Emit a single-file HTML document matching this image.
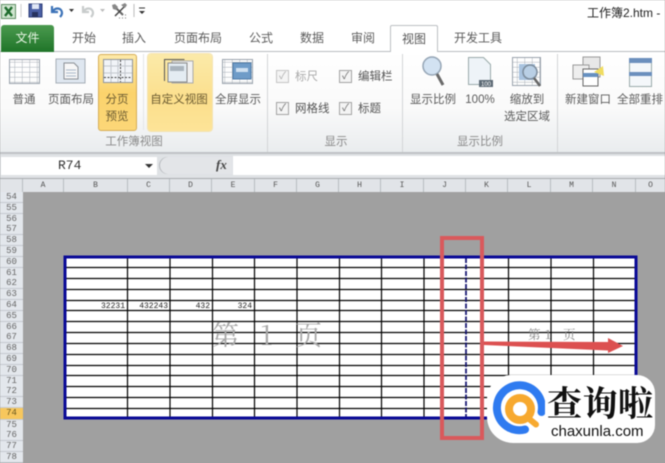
<!DOCTYPE html>
<html lang="zh"><head><meta charset="utf-8"><style>
html,body{margin:0;padding:0;background:#a0a0a0}
#p{position:relative;width:665px;height:463px;overflow:hidden;font-family:"Liberation Sans","Noto Sans CJK SC",sans-serif;color:#555;background:#a0a0a0;filter:blur(.4px)}
.a{position:absolute;white-space:nowrap}
.t{position:absolute;white-space:nowrap;font-size:11.5px;line-height:14px;color:#5a5a5a;text-align:center;transform:translateX(-50%)}
.tab{position:absolute;white-space:nowrap;font-size:12px;line-height:14px;top:31px;color:#5c5c5c;transform:translateX(-50%)}
.sep{position:absolute;top:54px;width:1px;height:98px;background:#d3d5d7}
.cb{position:absolute;width:11px;height:11px;border:1px solid #a3a3a3;background:#f4f4f4;font-size:10px;line-height:11px;text-align:center;color:#666}
.rh{position:absolute;left:0;width:23px;height:10px;border-bottom:1px solid #c4c9cf;background:#e3e7ec;font:9px/11px "Liberation Mono",monospace;color:#666;text-align:center}
.ch{position:absolute;top:179px;height:13px;border-right:1px solid #b8bcc1;background:#e1e4e8;font:8px/13px "Liberation Mono",monospace;color:#555;text-align:center}
.n{position:absolute;top:302px;font:8px/10px "Liberation Mono",monospace;color:#222;text-align:right}
.big{position:absolute;top:320px;font:27px/28px "Noto Serif CJK SC",serif;color:#a8a8a8}
.sm{position:absolute;top:327px;font:12.5px/15px "Noto Serif CJK SC",serif;color:#888}
</style></head><body><div id="p">
<!-- top -->
<div class="a" style="left:0;top:0;width:665px;height:52px;background:#fff"></div>
<div class="a" style="left:0;top:51px;width:665px;height:1px;background:#b8bcc0"></div>
<div class="a" style="left:0;top:52px;width:665px;height:101px;background:linear-gradient(#fff 0,#fafafa 55%,#e9ecee 100%)"></div>
<div class="a" style="left:0;top:152px;width:665px;height:2px;background:#bfc2c5"></div>
<!-- quick access -->
<svg class="a" style="left:0;top:0" width="150" height="24">
<rect x="1.500" y="4.500" width="14" height="14" fill="#cfe5cf" stroke="#5f8f64"/><path d="M5 7l7 9M12 7l-7 9" stroke="#1e6b2c" stroke-width="2.400"/>
<path d="M21 4v13" stroke="#ccc"/>
<rect x="29" y="4" width="13" height="13" fill="#4a5fa5" stroke="#2e3f78"/><rect x="32" y="4" width="7" height="5" fill="#dfe6f5"/><rect x="32" y="12" width="6" height="5" fill="#26325f"/>
<path d="M52 6v6h6M53 11c3-4 9-3 9 2 0 2-1 3-2 4" fill="none" stroke="#3d73b8" stroke-width="2.200"/><path d="M69 9h5l-2.500 3z" fill="#333"/>
<path d="M83 6v6h6M84 11c3-4 9-3 9 2 0 2-1 3-2 4" fill="none" stroke="#c8cccc" stroke-width="2.200"/><path d="M100 9h5l-2.500 3z" fill="#bbb"/>
<path d="M114 6l9 9" stroke="#666" stroke-width="2"/><path d="M126 5l-11 11" stroke="#444" stroke-width="1.500"/><path d="M112 5l3-1 3 3-2 3-3-1zM121 5l4-2 2 2-2 3z" fill="#888"/><path d="M119 18h1M122 18h1M125 18h1M122 15h1M125 15h1" stroke="#777"/>
<path d="M134 4v13" stroke="#bbb"/><path d="M139 8h6" stroke="#333"/><path d="M139 11h6l-3 3z" fill="#333"/>
</svg>
<div class="a" style="left:587px;top:6px;font-size:12px;line-height:14px;color:#222">工作簿2.htm -</div>
<!-- tabs -->
<div class="a" style="left:1px;top:25px;width:53px;height:27px;background:linear-gradient(#4b9a4f,#1f7428);border-radius:3px 3px 0 0;color:#e8f5e4;font-size:12px;line-height:26px;text-align:center">文件</div>
<div class="tab" style="left:84px">开始</div><div class="tab" style="left:134px">插入</div><div class="tab" style="left:198px">页面布局</div>
<div class="tab" style="left:261px">公式</div><div class="tab" style="left:312px">数据</div><div class="tab" style="left:363px">审阅</div>
<div class="a" style="left:390px;top:25px;width:48px;height:27px;box-sizing:border-box;border:1px solid #bcc0c3;border-bottom:0;background:#fff;border-radius:2px 2px 0 0;font-size:12px;line-height:27px;text-align:center;color:#555">视图</div>
<div class="tab" style="left:478px">开发工具</div>
<!-- highlights -->
<div class="a" style="left:98px;top:54px;width:39px;height:77px;box-sizing:border-box;border:1px solid #d6ad55;border-radius:3px;background:linear-gradient(#fde9a8,#fbd36c 50%,#fcd778)"></div>
<div class="a" style="left:148px;top:54px;width:64px;height:77px;border-radius:3px;background:linear-gradient(#fbeaa9,#fcdf8c 60%,#fde498);box-shadow:0 0 0 1px #f3e3b3"></div>
<!-- ribbon icons -->
<svg class="a" style="left:0;top:52px" width="665" height="50">
<defs><pattern id="g" width="7.500" height="5" patternUnits="userSpaceOnUse"><path d="M7.500 0V5M0 0H7.500" stroke="#a9b0b8" fill="none"/></pattern></defs>
<rect x="9.500" y="7.500" width="30" height="24" fill="url(#g)" stroke="#9aa3ad"/>
<rect x="56" y="7" width="29" height="24" fill="#dfe7f0" stroke="#a5adb6"/><path d="M64 11h10l4 4v12H64z" fill="#f7f7f7" stroke="#8a8f95"/><path d="M66 18h10M66 21h10M66 24h10" stroke="#a9b8c8"/>
<rect x="103.500" y="7.500" width="29" height="23" fill="#f1f4f8" stroke="#8f959c"/><path d="M111 8v22M118 8v22M125 8v22M104 14h28M104 21h28" stroke="#c2c7cd"/><path d="M120.500 8v22M104 25.500h28" stroke="#444" stroke-dasharray="2 1.500"/>
<rect x="172" y="9" width="21" height="22" fill="#f0f0f0" stroke="#aaa"/><rect x="168" y="11" width="19" height="19" fill="#e4ecf2" stroke="#888"/><rect x="170" y="14" width="14" height="5" fill="#aab4bd"/><path d="M164.500 7v22M164.500 7.500h20" stroke="#555" fill="none"/>
<rect x="222.500" y="7.500" width="30" height="24" fill="url(#g)" stroke="#9aa3ad"/><rect x="233" y="11" width="18" height="16" fill="#6f9cc8" stroke="#4f7ba8"/><rect x="236" y="16" width="12" height="4" fill="#cfe0f0"/>
<circle cx="432" cy="14" r="9" fill="#d2e2f2" stroke="#95a5b5" stroke-width="1.500"/><path d="M437 22l6 11" stroke="#6a6a6a" stroke-width="3"/>
<path d="M468.500 5.500h15l7 7v20h-22z" fill="#eef3f8" stroke="#9aa"/><rect x="479" y="28" width="14" height="7" fill="#5d6a75"/><text x="486" y="34" font-size="6" fill="#fff" text-anchor="middle" font-family="Liberation Sans">100</text>
<rect x="512.500" y="5.500" width="28" height="28" fill="url(#g)" stroke="#9aa3ad"/><rect x="519" y="12" width="16" height="16" fill="#a9c3df"/><circle cx="530" cy="20" r="7" fill="#b9cfe5" stroke="#7c8c9c" stroke-width="1.500"/><path d="M534 26l6 8" stroke="#666" stroke-width="2.500"/>
<rect x="583" y="5" width="17" height="20" fill="#e8e8e8" stroke="#999"/><rect x="573" y="13" width="16" height="14" fill="#eee" stroke="#999"/><rect x="583" y="17" width="15" height="17" fill="#fff" stroke="#666"/><rect x="583" y="21" width="15" height="4" fill="#6690c0"/><path d="M594 20l9-6 1 10z" fill="#f0dc60"/>
<rect x="629.500" y="6.500" width="22" height="28" fill="#f4f7fa" stroke="#9aa"/><rect x="629" y="6" width="23" height="5" fill="#6b8fbd"/><rect x="629" y="20" width="23" height="4" fill="#6b8fbd"/>
</svg>
<!-- separators -->
<div class="sep" style="left:267px"></div><div class="sep" style="left:402px"></div><div class="sep" style="left:557px"></div>
<div class="sep" style="left:143px;height:76px;background:#e4e6e8"></div>
<!-- ribbon labels -->
<div class="t" style="left:24px;top:93px">普通</div><div class="t" style="left:71px;top:93px">页面布局</div>
<div class="t" style="left:117px;top:92px;line-height:17px;color:#6a5a30">分页<br>预览</div>
<div class="t" style="left:179px;top:93px;color:#6a5a30">自定义视图</div><div class="t" style="left:238px;top:93px">全屏显示</div>
<div class="t" style="left:134px;top:135px;color:#8a8a8a">工作簿视图</div>
<div class="cb" style="left:276px;top:70px;color:#aaa;border-color:#c5c5c5">✓</div><div class="a" style="left:295px;top:70px;font-size:11.500px;line-height:14px;color:#aaa">标尺</div>
<div class="cb" style="left:339px;top:70px">✓</div><div class="a" style="left:358px;top:70px;font-size:11.500px;line-height:14px">编辑栏</div>
<div class="cb" style="left:276px;top:102px">✓</div><div class="a" style="left:295px;top:102px;font-size:11.500px;line-height:14px">网格线</div>
<div class="cb" style="left:339px;top:102px">✓</div><div class="a" style="left:358px;top:102px;font-size:11.500px;line-height:14px">标题</div>
<div class="t" style="left:336px;top:135px;color:#8a8a8a">显示</div>
<div class="t" style="left:433px;top:93px">显示比例</div><div class="t" style="left:480px;top:93px">100%</div>
<div class="t" style="left:527px;top:92px;line-height:17px">缩放到<br>选定区域</div>
<div class="t" style="left:480px;top:135px;color:#8a8a8a">显示比例</div>
<div class="t" style="left:588px;top:93px">新建窗口</div><div class="t" style="left:640px;top:93px">全部重排</div>
<!-- formula bar -->
<div class="a" style="left:0;top:154px;width:665px;height:25px;background:#dfe2e5"></div>
<div class="a" style="left:1px;top:157px;width:156px;height:18px;background:#fff;font:13px/18px 'Liberation Mono',monospace;color:#333;text-indent:57px">R74</div>
<div class="a" style="left:145px;top:164px;width:0;height:0;border:4px solid transparent;border-top:4px solid #333"></div>
<div class="a" style="left:159px;top:157px;width:73px;height:17px;border-radius:9px 0 0 9px;background:#e3e5e8;box-shadow:inset 1px 0 0 #b5b8bc"></div>
<div class="a" style="left:216px;top:157px;font:italic bold 13px/16px 'Liberation Serif',serif;color:#444">fx</div>
<div class="a" style="left:233px;top:156px;width:432px;height:19px;background:#fff"></div>
<!-- column headers -->
<div class="a" style="left:0;top:178px;width:665px;height:1px;background:#a8acb0"></div>
<div class="ch" style="left:0;width:22px"></div>
<div class="ch" style="left:23px;width:40px">A</div><div class="ch" style="left:64px;width:63px">B</div><div class="ch" style="left:128px;width:41px">C</div>
<div class="ch" style="left:170px;width:41px">D</div><div class="ch" style="left:212px;width:42px">E</div><div class="ch" style="left:255px;width:41px">F</div>
<div class="ch" style="left:297px;width:41px">G</div><div class="ch" style="left:339px;width:41px">H</div><div class="ch" style="left:381px;width:42px">I</div>
<div class="ch" style="left:424px;width:41px">J</div><div class="ch" style="left:466px;width:41px">K</div><div class="ch" style="left:508px;width:42px">L</div>
<div class="ch" style="left:551px;width:41px">M</div><div class="ch" style="left:593px;width:42px">N</div><div class="ch" style="left:636px;width:29px">O</div>
<!-- row headers -->
<div class="rh" style="top:192px">54</div><div class="rh" style="top:203px">55</div><div class="rh" style="top:214px">56</div><div class="rh" style="top:224px">57</div><div class="rh" style="top:235px">58</div><div class="rh" style="top:246px">59</div><div class="rh" style="top:257px">60</div><div class="rh" style="top:268px">61</div><div class="rh" style="top:278px">62</div><div class="rh" style="top:289px">63</div><div class="rh" style="top:300px">64</div><div class="rh" style="top:311px">65</div><div class="rh" style="top:322px">66</div><div class="rh" style="top:332px">67</div><div class="rh" style="top:343px">68</div><div class="rh" style="top:354px">69</div><div class="rh" style="top:365px">70</div><div class="rh" style="top:376px">71</div><div class="rh" style="top:386px">72</div><div class="rh" style="top:397px">73</div>
<div class="rh" style="top:408px;height:11px;background:#f7c75d;color:#6a5a20">74</div>
<div class="rh" style="top:420px">75</div><div class="rh" style="top:430px">76</div><div class="rh" style="top:441px">77</div><div class="rh" style="top:452px">78</div>
<!-- sheet -->
<svg class="a" style="left:0;top:0" width="665" height="463">
<rect x="65" y="257" width="571" height="161" fill="#fff"/>
<g stroke="#000" stroke-width="1.200">
<path d="M65 267.500H636M65 278.500H636M65 289.500H636M65 300.500H636M65 310.500H636M65 321.500H636M65 332.500H636M65 343.500H636M65 354.500H636M65 365.500H636M65 375.500H636M65 386.500H636M65 397.500H636M65 408.500H636"/>
<path d="M127.500 257V418M170 257V418M212.500 257V418M254.500 257V418M297 257V418M339.500 257V418M381.500 257V418M424 257V418M508.500 257V418M551 257V418M593.500 257V418"/>
</g>
<path d="M466 258V418" stroke="#10106e" stroke-width="1.700" stroke-dasharray="5 1.500"/>
<rect x="65" y="257" width="571" height="161" fill="none" stroke="#0a0a96" stroke-width="3"/>
</svg>
<div class="n" style="left:85px;width:40px">32231</div><div class="n" style="left:128px;width:40px">432243</div><div class="n" style="left:170px;width:40px">432</div><div class="n" style="left:212px;width:40px">324</div>
<div class="big" style="left:212px">第</div><div class="big" style="left:260px">1</div><div class="big" style="left:295px">页</div>
<div class="sm" style="left:528px">第</div><div class="sm" style="left:545px">1</div><div class="sm" style="left:563px">页</div>
<svg class="a" style="left:0;top:0" width="665" height="463">
<rect x="442" y="238" width="40" height="200" fill="none" stroke="#d9595c" stroke-width="4"/>
<path d="M484 341.500L608 342V338L623 346L608 353V350.500L484 345Z" fill="#dc5050"/>
</svg>
<!-- watermark -->
<div class="a" style="left:487px;top:375px;width:168px;height:68px;background:#fff;border-radius:24px 18px 18px 26px"></div>
<svg class="a" style="left:485px;top:375px" width="60" height="68">
<path d="M40 54.500A22.500 22.500 0 1 1 56.500 37" fill="none" stroke="#2f7bf0" stroke-width="8" stroke-linecap="round"/>
<circle cx="35" cy="34" r="11" fill="none" stroke="#f7a92f" stroke-width="8"/>
<path d="M43 43l8 6.500" stroke="#f7a92f" stroke-width="6" stroke-linecap="round"/>
</svg>
<div class="a" style="left:547px;top:380px;font:bold 35px/44px 'Noto Serif CJK SC',serif;color:#111;letter-spacing:.5px">查询啦</div>
<div class="a" style="left:551px;top:424px;font:15px/16px 'Liberation Sans',sans-serif;color:#111">chaxunla.com</div>
</div></body></html>
